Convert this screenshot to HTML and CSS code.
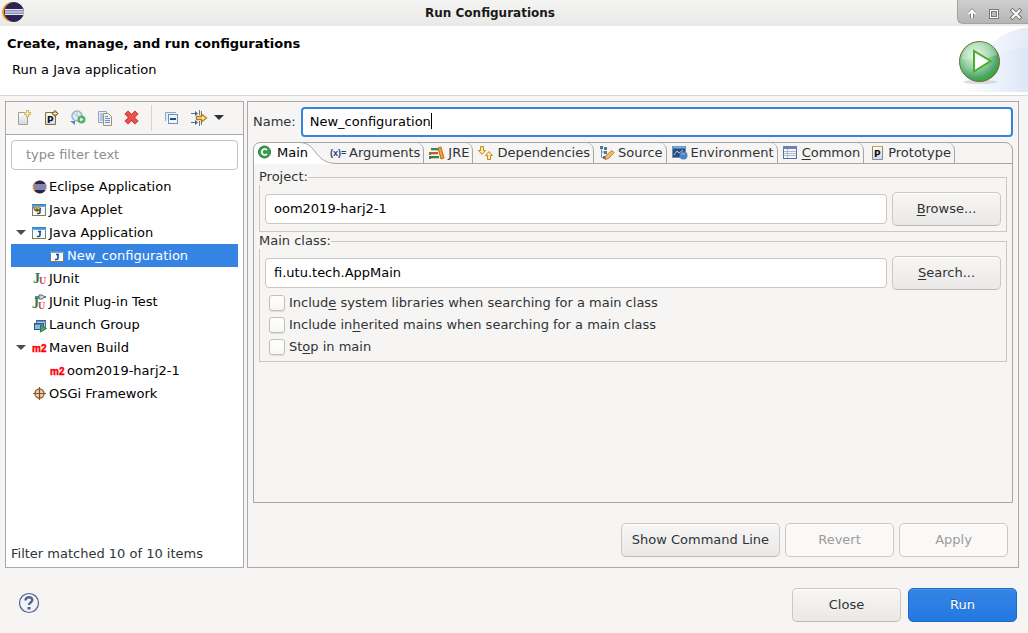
FILE: index.html
```html
<!DOCTYPE html>
<html lang="en">
<head>
    <meta charset="UTF-8">
    <meta name="viewport" content="width=device-width, initial-scale=1.0">
    <title>Run Configurations</title>
    <link rel="stylesheet" href="styles.css">
</head>
<body>
    <!-- Shared icon shapes -->
    <svg class="defs" width="0" height="0" aria-hidden="true">
        <defs>
            <linearGradient id="page-fill" x1="0" y1="0" x2="0" y2="1">
                <stop offset="0" stop-color="#fffdf2"/><stop offset="1" stop-color="#c9d9f2"/>
            </linearGradient>
            <linearGradient id="title-fill" x1="0" y1="0" x2="0" y2="1">
                <stop offset="0" stop-color="#3478b8"/><stop offset="1" stop-color="#69b4e4"/>
            </linearGradient>
            <radialGradient id="ball" cx="0.4" cy="0.35" r="0.7">
                <stop offset="0" stop-color="#e2f5e5"/><stop offset="0.45" stop-color="#9ad3a5"/>
                <stop offset="0.8" stop-color="#4aa565"/><stop offset="1" stop-color="#35a51a"/>
            </radialGradient>
            <symbol id="java-app" viewBox="0 0 16 16">
                <rect x="1.500" y="2.500" width="13" height="11" fill="#f4faff" stroke="#8b7a45"/>
                <path d="M1.500 10V4M14.500 10V4" stroke="#5f86a0"/>
                <rect x="1" y="2" width="14" height="3" fill="url(#title-fill)"/>
                <path d="M7 6.500h3M9 6v4q0 1.500-1.500 1.500H6" fill="none" stroke="#174f88" stroke-width="1.600"/>
            </symbol>
            <symbol id="m2" viewBox="0 0 16 16">
                <text x="1" y="12" class="m2-text">m2</text>
            </symbol>
            <symbol id="eclipse" viewBox="0 0 16 16">
                <circle cx="8" cy="8" r="6.500" fill="#f3a23b"/>
                <circle cx="9" cy="8" r="6.500" fill="#2c2255"/>
                <path d="M3 6h12M2 8h14M3 10h12" stroke="#e4e5f3" stroke-width="1.100"/>
            </symbol>
        </defs>
    </svg>

    <!-- Title bar -->
    <header class="titlebar">
        <svg class="app-icon" width="24" height="24" viewBox="0 0 24 24">
            <circle cx="11" cy="12" r="10" fill="#f09a26"/>
            <circle cx="13" cy="12" r="9.500" fill="#2c2255" stroke="#2f3050"/>
            <rect x="4" y="9" width="19" height="6" fill="#8e8fb4"/>
            <path d="M4 9.500h18M4 14.500h19" stroke="#e8e8f2"/>
            <path d="M4 12h19" stroke="#b5b9d5" stroke-width="2"/>
        </svg>
        <h1>Run Configurations</h1>
        <div class="window-controls">
            <button aria-label="Shade"><svg width="14" height="14" viewBox="0 0 14 14"><path d="M7 11V5M4 7l3-3 3 3" fill="none" stroke="#777" stroke-width="4"/><path d="M7 11V4M3.500 7L7 3.500 10.500 7" fill="none" stroke="#fff" stroke-width="2"/></svg></button>
            <button aria-label="Maximize"><svg width="14" height="14" viewBox="0 0 14 14"><rect x="2" y="2" width="10" height="10" fill="#777"/><rect x="3.500" y="3.500" width="7" height="7" fill="#777" stroke="#fff"/><rect x="5" y="5" width="4" height="4" fill="#bbb"/></svg></button>
            <button aria-label="Close window"><svg width="14" height="14" viewBox="0 0 14 14"><path d="M3.500 3.500l7 7M10.500 3.500l-7 7" stroke="#777" stroke-width="4" stroke-linecap="square"/><path d="M3.500 3.500l7 7M10.500 3.500l-7 7" stroke="#fff" stroke-width="2" stroke-linecap="square"/></svg></button>
        </div>
    </header>

    <!-- Dialog heading -->
    <section class="banner">
        <div class="banner-text">
            <h2>Create, manage, and run configurations</h2>
            <p>Run a Java application</p>
        </div>
        <svg width="75" height="69" viewBox="0 0 75 69">
            <defs>
                <linearGradient id="swoosh" x1="0" y1="0" x2="1" y2="0">
                    <stop offset="0" stop-color="#fff"/><stop offset="1" stop-color="#dde6f7"/>
                </linearGradient>
            </defs>
            <path d="M8 66Q28 8 75 1V66z" fill="url(#swoosh)" opacity="0.8"/>
            <path d="M8 66Q38 24 75 21V66z" fill="url(#swoosh)"/>
            <ellipse cx="27" cy="56" rx="17" ry="2" fill="#c4c8c6" opacity="0.6"/>
            <circle cx="26.500" cy="35.500" r="20" fill="url(#ball)" stroke="#6b7038"/>
            <path d="M9 33C12 12 40 10 44 29Q26 35 9 33z" fill="#fff" opacity="0.250"/>
            <path d="M21 25v20.500l16.500-10.500z" fill="#fff" stroke="#4cac2a" stroke-width="2"/>
        </svg>
    </section>

    <main class="content">
        <!-- Configuration list -->
        <aside class="panel list-panel">
            <div class="toolbar">
                <button aria-label="New configuration"><svg width="16" height="16" viewBox="0 0 16 16"><path d="M2.500 2.500h9v12h-9z" fill="url(#page-fill)" stroke="#a9a080"/><path d="M11.500 0v7M8 3.500h7" stroke="#d3b468" stroke-width="3"/><path d="M11.500 1v5M9 3.500h5" stroke="#fff6cc"/></svg></button>
                <button aria-label="New prototype"><svg width="16" height="16" viewBox="0 0 16 16"><path d="M2.500 2.500h10v12h-10z" fill="url(#page-fill)" stroke="#806f45"/><text x="4" y="13" class="p-text">P</text><path d="M12 0l3.500 3.500L12 7 8.500 3.500z" fill="#8d5b12"/><path d="M12 1.500v4M10 3.500h4" stroke="#fff3b8"/></svg></button>
                <button aria-label="Export"><svg width="16" height="16" viewBox="0 0 16 16"><circle cx="7" cy="6" r="5" fill="#e1e9f2" stroke="#9fb1c8" stroke-width="1.500"/><path d="M7 1v5l4 2M3 3l8 6" fill="none" stroke="#b8c6d8"/><circle cx="11.500" cy="9.500" r="4" fill="#57b16c"/><path d="M10.300 7.500v4l3-2z" fill="#fff"/><path d="M0 11h5v4z" fill="#5787bd"/></svg></button>
                <button aria-label="Duplicate"><svg width="16" height="16" viewBox="0 0 16 16"><path d="M1.500 1.500h8v11h-8z" fill="#e8f0fa" stroke="#8ca3c3"/><path d="M3 4h3M3 6h3M3 8h3M3 10h3" stroke="#7c9acb"/><path d="M6.500 3.500h5l3 3v9h-8z" fill="#eaf2fc" stroke="#a5956a"/><path d="M8 6.500h3M8 8.500h5M8 10.500h5M8 12.500h5" stroke="#6c8fc5"/></svg></button>
                <button aria-label="Delete"><svg width="16" height="16" viewBox="0 0 16 16"><path d="M4 4l7 7M11 4l-7 7" stroke="#c9302f" stroke-width="5" stroke-linecap="square"/><path d="M4 4l7 7M11 4l-7 7" stroke="#ea5350" stroke-width="3.400" stroke-linecap="square"/></svg></button>
                <span class="separator"></span>
                <button aria-label="Collapse all"><svg width="16" height="16" viewBox="0 0 16 16"><path d="M1.500 11V2.500H12" fill="#e3edf7" stroke="#8aa8c7"/><rect x="4.500" y="4.500" width="9" height="9" fill="#eef6fd" stroke="#6f93b8"/><path d="M6 9h6" stroke="#224f86" stroke-width="2"/></svg></button>
                <button class="filter-button" aria-label="Filter"><svg width="23" height="16" viewBox="0 0 23 16"><path d="M0 3.500h6M0 12.500h6" stroke="#4e6e9e"/><path d="M4 1l3 2.500L4 6zM4 10l3 2.500L4 15z" fill="#47658f"/><path d="M8.500 0v5M8.500 11v5M10.500 1v3M10.500 12v3" stroke="#607a9b"/><path d="M5.500 6.500h5v-2.500l5 4-5 4V9.500h-5z" fill="#ffe9a3" stroke="#b37a12" stroke-width="1.300"/></svg><svg class="menu-arrow" width="10" height="6" viewBox="0 0 10 6"><path d="M0 0h10L5 5z" fill="#2e3436"/></svg></button>
            </div>
            <div class="list-body">
                <input class="filter" type="text" placeholder="type filter text" aria-label="Filter configurations">
                <ul class="tree" role="tree">
                    <li role="treeitem"><svg class="icon" viewBox="0 0 16 16"><use href="#eclipse"/></svg>Eclipse Application</li>
                    <li role="treeitem"><svg class="icon" viewBox="0 0 16 16"><use href="#java-app"/><path d="M2 5h7v3q-3 3-6 0z" fill="#6c4a1b"/><path d="M3 5l1.500 2L6 5l1.500 2L9 5" fill="none" stroke="#f3aa35" stroke-width="1.300"/></svg>Java Applet</li>
                    <li role="treeitem" aria-expanded="true"><svg class="expander" viewBox="0 0 10 6"><path d="M0 0h10L5 5z"/></svg><svg class="icon" viewBox="0 0 16 16"><use href="#java-app"/></svg>Java Application</li>
                    <li role="treeitem" class="child selected" aria-selected="true"><svg class="icon" viewBox="0 0 16 16"><use href="#java-app"/></svg>New_configuration</li>
                    <li role="treeitem"><svg class="icon" viewBox="0 0 16 16"><text x="2" y="12" class="ju-text ju-green">J</text><text x="8" y="13" class="ju-text ju-red">U</text></svg>JUnit</li>
                    <li role="treeitem"><svg class="icon" viewBox="0 0 16 16"><text x="1" y="14" class="ju-text ju-green">J</text><text x="7" y="15" class="ju-text ju-red">U</text><path d="M4 3h11" stroke="#4b8ab8" stroke-width="2"/><path d="M8 1h3l3 2-3 2H8z" fill="#f4d48b" stroke="#3b6f9d"/></svg>JUnit Plug-in Test</li>
                    <li role="treeitem"><svg class="icon" viewBox="0 0 16 16"><rect x="5.500" y="3.500" width="9" height="7" fill="#a9c9ed" stroke="#4a71a6"/><rect x="3.500" y="6.500" width="9" height="6" fill="#8cb7e2" stroke="#2e5688"/><path d="M4 7h8M6 4h8" stroke="#2e5688"/><path d="M9.500 8v7l6-3.500z" fill="#46a667" stroke="#287a44"/></svg>Launch Group</li>
                    <li role="treeitem" aria-expanded="true"><svg class="expander" viewBox="0 0 10 6"><path d="M0 0h10L5 5z"/></svg><svg class="icon" viewBox="0 0 16 16"><use href="#m2"/></svg>Maven Build</li>
                    <li role="treeitem" class="child"><svg class="icon" viewBox="0 0 16 16"><use href="#m2"/></svg>oom2019-harj2-1</li>
                    <li role="treeitem"><svg class="icon" viewBox="0 0 16 16"><circle cx="8.500" cy="7.500" r="4.500" fill="#efcfaa" stroke="#98683b" stroke-width="1.400"/><path d="M8.500 1v13M2 7.500h13" stroke="#80532c" stroke-width="1.200"/></svg>OSGi Framework</li>
                </ul>
                <p class="status">Filter matched 10 of 10 items</p>
            </div>
        </aside>

        <!-- Configuration editor -->
        <section class="panel editor">
            <div class="name-row">
                <label for="name">Name:</label>
                <div class="name-field">
                    <input id="name" type="text" value="New_configuration">
                    <span class="caret"></span>
                </div>
            </div>
            <div class="folder">
                <div class="tabs" role="tablist">
                    <button class="tab active" role="tab" aria-selected="true">
                        <svg class="tab-shape" width="84" height="22" viewBox="0 0 84 22"><path d="M0 22V8Q0 0.500 8 0.500H46C65 0.500 60 21.500 84 21.500V22z" fill="#fff"/><path d="M0.500 22V8Q0.500 0.500 8 0.500H46C65 0.500 60 21.500 84 21.500" fill="none" stroke="#a6a6a6"/></svg>
                        <svg class="icon" viewBox="0 0 16 16"><circle cx="6.500" cy="7" r="6" fill="#3c9c52" stroke="#26783b"/><path d="M9 5A3 3 0 1 0 9 9" fill="none" stroke="#fff" stroke-width="1.700"/></svg>
                        <span>Main</span>
                    </button>
                    <button class="tab" role="tab"><svg class="icon" viewBox="0 0 16 16"><text x="0" y="11" class="x-text">(x)=</text></svg><span>Arguments</span></button>
                    <button class="tab" role="tab"><svg class="icon" viewBox="0 0 16 16"><path d="M2 3h8v3H2z" fill="#2c8a73"/><path d="M0 7h9v3H0z" fill="#b9642b"/><path d="M0 11h10v3H0z" fill="#2b7c71"/><path d="M2 5.500h7M2 9.500h7M2 13.500h8" stroke="#e2c98f"/><path d="M9 3l3-1 3 11-3 1z" fill="#efa23a" stroke="#bf6c1d"/></svg><span>JRE</span></button>
                    <button class="tab" role="tab"><svg class="icon" viewBox="0 0 16 16"><path d="M2.500 1.500h3v4h2l-3.500 4-3.500-4h2z" fill="#ffe9a8" stroke="#c28a1c"/><path d="M9.500 14.500h3v-4h2l-3.500-4-3.500 4h2z" fill="#ffe9a8" stroke="#c28a1c"/></svg><span>Dependencies</span></button>
                    <button class="tab" role="tab"><svg class="icon" viewBox="0 0 16 16"><path d="M2.500 3v9.500H5M2.500 7H5" fill="none" stroke="#7591b6"/><rect x="1" y="1" width="3" height="3" fill="#52779e"/><rect x="5" y="2" width="3" height="3" fill="#52779e"/><rect x="5" y="6" width="3" height="3" fill="#52779e"/><rect x="4" y="11" width="3" height="3" fill="#52779e"/><path d="M6 14.500l1-4 6-5 2 2-5.500 6z" fill="#f6bd62" stroke="#b67b35"/></svg><span>Source</span></button>
                    <button class="tab" role="tab"><svg class="icon" viewBox="0 0 16 16"><rect x="0.500" y="1.500" width="13" height="11" fill="#284e7e" stroke="#7390b4"/><path d="M1 2.500h12" stroke="#74ace0" stroke-width="2"/><path d="M2 10l3-4 2 2 4-3" fill="none" stroke="#b9c9dd"/><circle cx="11.500" cy="10.500" r="4" fill="#4d83c4"/><path d="M9 9.500q2-2 4 0" fill="none" stroke="#9ac1e9"/></svg><span>Environment</span></button>
                    <button class="tab" role="tab"><svg class="icon" viewBox="0 0 16 16"><rect x="0.500" y="1.500" width="13" height="12" fill="#f6faff" stroke="#5b719b"/><rect x="0" y="1" width="14" height="3" fill="#6b83ae"/><path d="M1 6.500h12M1 8.500h12M1 10.500h12M4.500 4v9" stroke="#a9bad2"/></svg><span><u>C</u>ommon</span></button>
                    <button class="tab" role="tab"><svg class="icon" viewBox="0 0 16 16"><path d="M3.500 1.500h10v13h-10z" fill="url(#page-fill)" stroke="#8a8c82"/><path d="M3 1.500h11" stroke="#c4a54d"/><text x="5" y="12" class="p-text">P</text></svg><span>Prototype</span></button>
                </div>
                <div class="tab-page" role="tabpanel">
                    <fieldset>
                        <legend>Project:</legend>
                        <div class="field-row">
                            <input type="text" value="oom2019-harj2-1" aria-label="Project">
                            <button class="btn"><span><u>B</u>rowse...</span></button>
                        </div>
                    </fieldset>
                    <fieldset>
                        <legend>Main class:</legend>
                        <div class="field-row">
                            <input type="text" value="fi.utu.tech.AppMain" aria-label="Main class">
                            <button class="btn"><span><u>S</u>earch...</span></button>
                        </div>
                        <div class="checks">
                            <label><input type="checkbox"><span>Includ<u>e</u> system libraries when searching for a main class</span></label>
                            <label><input type="checkbox"><span>Include in<u>h</u>erited mains when searching for a main class</span></label>
                            <label><input type="checkbox"><span>St<u>o</u>p in main</span></label>
                        </div>
                    </fieldset>
                </div>
            </div>
            <div class="editor-actions">
                <button class="btn">Show Command Line</button>
                <button class="btn" disabled>Revert</button>
                <button class="btn" disabled>Apply</button>
            </div>
        </section>
    </main>

    <footer class="footer">
        <button class="help" aria-label="Help"><svg width="22" height="22" viewBox="0 0 22 22"><circle cx="11" cy="11" r="9.500" fill="#f2f3f6" stroke="#4f6088" stroke-width="1.200"/><path d="M7.500 8.500C7.500 4 14.500 4.500 14.300 8C14.200 10.500 11 10.500 11 13" fill="none" stroke="#53658f" stroke-width="2.400"/><rect x="9.500" y="15" width="3" height="2.500" fill="#53658f"/></svg></button>
        <div class="footer-actions">
            <button class="btn">Close</button>
            <button class="btn primary">Run</button>
        </div>
    </footer>
</body>
</html>
```
FILE: styles.css
```css
/* Global Styles */
* { box-sizing: border-box; margin: 0; padding: 0; }
body {
    font-family: "DejaVu Sans", sans-serif;
    font-size: 13px;
    line-height: 16px;
    color: #2e3436;
    background: #f6f5f4;
    min-height: 100vh;
    display: flex;
    flex-direction: column;
}
button, input {
    font: inherit;
    color: inherit;
}
button {
    border: none;
    background: none;
}
u { text-underline-offset: 2px; }
.defs { position: absolute; }

/* Title bar */
.titlebar {
    height: 26px;
    display: grid;
    grid-template-columns: 71px 1fr 71px;
    background: linear-gradient(#f4f4f3, #e9e9e7);
}
.app-icon { margin-left: 1px; }
h1 {
    font-size: 12px;
    line-height: 26px;
    text-align: center;
    color: #1a1a1a;
    padding-right: 48px;
}
.window-controls {
    height: 24px;
    display: flex;
    gap: 8px;
    padding: 5px 5px 0 7px;
    background: linear-gradient(#cfcfcf, #b5b5b5);
    border-left: 1px solid #a2a2a2;
    border-bottom: 1px solid #a2a2a2;
    border-bottom-left-radius: 6px;
}
.window-controls svg { display: block; }

/* Heading */
.banner {
    display: flex;
    justify-content: space-between;
    height: 70px;
    background: #fff;
    border-bottom: 1px solid #d9d9d9;
    color: #000;
}
.banner-text { padding: 10px 7px; }
h2 { font-size: 13px; line-height: 16px; }
.banner-text p { padding: 10px 5px; }

/* Main area */
.content {
    flex: 1;
    display: grid;
    grid-template-columns: 239px 1fr;
    gap: 3px;
    padding: 5px 9px 0 5px;
}
.panel {
    border: 1px solid #a9a9a9;
    display: flex;
    flex-direction: column;
}
.list-panel { background: #fff; }
.toolbar {
    height: 33px;
    display: flex;
    align-items: center;
    gap: 11px;
    padding: 0 10px;
    background: #f6f5f4;
    border-bottom: 1px solid #a9a9a9;
}
.toolbar svg { display: block; }
.separator {
    height: 26px;
    border-left: 1px solid #d8d5d1;
    margin-right: 1px;
}
.filter-button { display: flex; align-items: center; }
.list-body {
    flex: 1;
    display: flex;
    flex-direction: column;
    padding: 5px;
}
.filter {
    height: 30px;
    width: 100%;
    padding: 0 14px 2px;
    border: 1px solid #c6c3bf;
    border-radius: 4px;
    background: #fff;
}
.filter::placeholder { color: #8b8e8f; opacity: 1; }
.tree {
    list-style: none;
    padding-top: 5px;
    color: #000;
}
.tree li {
    height: 23px;
    display: flex;
    align-items: center;
    gap: 2px;
    padding-left: 20px;
}
.tree li.child { padding-left: 38px; }
.tree li[aria-expanded] { padding-left: 5px; }
.tree li[aria-expanded] .icon { margin-left: 3px; }
.tree li.selected { background: #3584e4; color: #fff; }
.expander { width: 10px; height: 6px; fill: #4c4c4c; }
.icon { width: 16px; height: 16px; flex: none; overflow: visible; }
.status { margin-top: auto; }

/* Icon lettering */
.m2-text { font: bold 10px "Liberation Sans", sans-serif; fill: #f00; stroke: #f00; stroke-width: 0.4px; }
.ju-text { font-family: "Liberation Serif", serif; font-weight: bold; }
.ju-green { font-size: 14px; fill: #28794c; }
.ju-red { font-size: 10px; fill: #d3404c; }
.p-text { font: bold 9px "DejaVu Sans", sans-serif; fill: #111; }
.x-text { font: bold 9px "Liberation Sans", sans-serif; fill: #233f7d; }

/* Editor */
.editor { padding: 5px; }
.name-row {
    display: flex;
    align-items: center;
    gap: 5px;
}
.name-field { position: relative; flex: 1; }
.name-field input, .field-row input {
    width: 100%;
    height: 30px;
    padding: 0 8px 2px;
    border: 1px solid #cdc7c2;
    border-radius: 4px;
    background: #fff;
    color: #000;
}
.name-field input {
    display: block;
    border: 2px solid #3584e4;
    padding: 0 7px 2px;
    outline: none;
}
.caret {
    position: absolute;
    left: 130px;
    top: 6px;
    width: 1px;
    height: 16px;
    background: #000;
}
.folder {
    flex: 1;
    display: flex;
    flex-direction: column;
    margin-top: 5px;
    border: 1px solid #a6a6a6;
    border-radius: 8px 8px 0 0;
}
.tabs {
    display: flex;
    height: 21px;
    border-bottom: 1px solid #a6a6a6;
}
.tab {
    display: flex;
    align-items: center;
    gap: 3px;
    padding: 0 3px 0 5px;
    border-right: 1px solid #a6a6a6;
    border-top-right-radius: 7px;
    white-space: nowrap;
}
.tab.active {
    position: relative;
    border: none;
    padding: 0 17px 0 4px;
    color: #000;
}
.tab.active .icon, .tab.active span { position: relative; }
.tab-shape {
    position: absolute;
    left: -1px;
    top: -1px;
}
.tab-page { padding: 5px; }
fieldset {
    border: 1px solid #cdc7c2;
    padding: 7px 5px 3px;
}
fieldset + fieldset { margin-top: 1px; }
legend { margin-left: -6px; }
.field-row {
    display: flex;
    align-items: center;
    gap: 5px;
    padding-bottom: 2px;
}
.btn {
    min-width: 109px;
    height: 34px;
    padding: 0 10px;
    border: 1px solid #cdc7c2;
    border-bottom-color: #bfb8b1;
    border-radius: 5px;
    background: linear-gradient(#f7f6f5, #ebe9e8);
    box-shadow: inset 0 1px #fff;
}
.btn:disabled {
    color: #9a9c9d;
    background: #faf9f8;
    border-color: #cdc7c2;
}
.btn.primary {
    color: #fff;
    border-color: #1b6acb;
    background: linear-gradient(#3584e4, #2379e2);
    box-shadow: inset 0 1px #5396e8;
    text-shadow: 0 -1px rgba(0, 0, 0, 0.3);
}
.checks { padding: 0 4px; }
.checks label {
    height: 22px;
    display: flex;
    align-items: center;
    gap: 4px;
}
.checks input {
    appearance: none;
    width: 16px;
    height: 16px;
    border: 1px solid #c6bfb9;
    border-radius: 3px;
    background: linear-gradient(#fff, #f8f7f6);
    box-shadow: 0 1px 1px #dedbd8;
}
.editor-actions {
    display: flex;
    justify-content: flex-end;
    gap: 5px;
    padding: 20px 5px 5px;
}

/* Footer */
.footer {
    display: flex;
    align-items: center;
    justify-content: space-between;
    padding: 20px 11px 11px 18px;
}
.help { margin-bottom: 4px; }
.help svg { display: block; }
.footer-actions { display: flex; gap: 7px; }
```
